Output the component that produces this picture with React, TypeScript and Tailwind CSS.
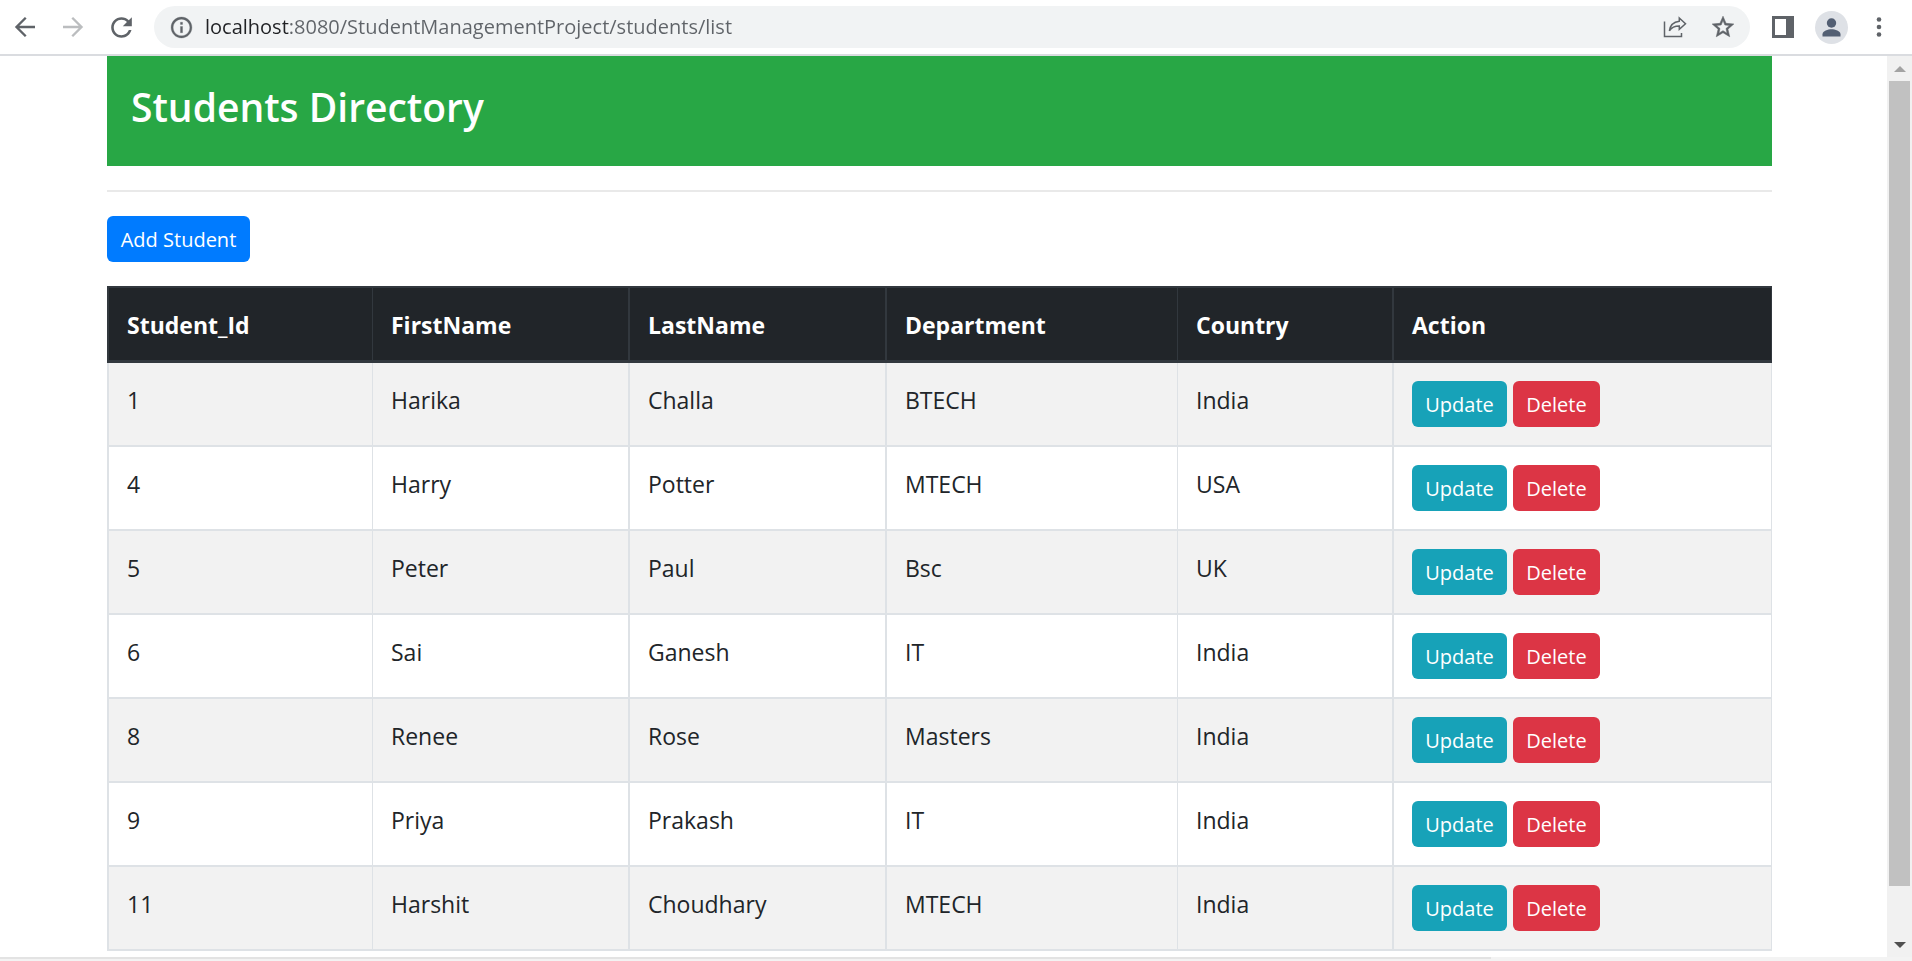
import type { ReactNode } from "react";

type Student = {
  id: number;
  firstName: string;
  lastName: string;
  department: string;
  country: string;
};

const students: Student[] = [
  { id: 1, firstName: "Harika", lastName: "Challa", department: "BTECH", country: "India" },
  { id: 4, firstName: "Harry", lastName: "Potter", department: "MTECH", country: "USA" },
  { id: 5, firstName: "Peter", lastName: "Paul", department: "Bsc", country: "UK" },
  { id: 6, firstName: "Sai", lastName: "Ganesh", department: "IT", country: "India" },
  { id: 8, firstName: "Renee", lastName: "Rose", department: "Masters", country: "India" },
  { id: 9, firstName: "Priya", lastName: "Prakash", department: "IT", country: "India" },
  { id: 11, firstName: "Harshit", lastName: "Choudhary", department: "MTECH", country: "India" },
];

const columns = [
  { title: "Student_Id", width: "w-[265px]", border: "border-l-2" },
  { title: "FirstName", width: "w-[256px]", border: "border-l" },
  { title: "LastName", width: "w-[257px]", border: "border-l-2" },
  { title: "Department", width: "w-[292px]", border: "border-l-2" },
  { title: "Country", width: "w-[215px]", border: "border-l" },
  { title: "Action", width: "w-[380px]", border: "border-l-2 border-r" },
];

function IconButton({ label, children }: { label: string; children: ReactNode }) {
  return (
    <button type="button" aria-label={label} className="flex size-8 shrink-0 items-center justify-center text-[#5f6368]">
      {children}
    </button>
  );
}

function BrowserBar() {
  return (
    <header className="flex h-14 items-center border-b-2 border-[#dadce0] bg-white pl-[9px] pr-[17px]">
      <nav aria-label="History" className="mr-[17px] flex gap-4">
        <IconButton label="Back">
          <svg viewBox="0 0 24 24" className="size-[30px]" fill="none" stroke="currentColor" strokeWidth="1.9">
            <path d="M20 12H5M12.6 4.6L5.2 12l7.4 7.4" />
          </svg>
        </IconButton>
        <IconButton label="Forward">
          <svg viewBox="0 0 24 24" className="size-[30px] text-[#bbbdbf]" fill="none" stroke="currentColor" strokeWidth="1.9">
            <path d="M4 12h15M11.4 4.6l7.4 7.4-7.4 7.4" />
          </svg>
        </IconButton>
        <IconButton label="Reload">
          <svg viewBox="0 0 24 24" className="size-[31px]" fill="currentColor">
            <path d="M17.65 6.35C16.2 4.9 14.21 4 12 4c-4.42 0-7.99 3.58-7.99 8s3.57 8 7.99 8c3.73 0 6.84-2.55 7.73-6h-2.08c-.82 2.33-3.04 4-5.65 4-3.31 0-6-2.69-6-6s2.69-6 6-6c1.66 0 3.14.69 4.22 1.78L13 11h7V4l-2.35 2.35z" />
          </svg>
        </IconButton>
      </nav>
      <div className="flex h-[42px] flex-1 items-center rounded-full bg-[#f1f3f4] pl-[11px] pr-[11px]">
        <IconButton label="Site information">
          <svg viewBox="0 0 24 24" className="size-[25px]" fill="currentColor" stroke="currentColor" strokeWidth="0.3">
            <path d="M11 7h2v2h-2zm0 4h2v6h-2zm1-9C6.48 2 2 6.48 2 12s4.48 10 10 10 10-4.48 10-10S17.52 2 12 2zm0 18c-4.41 0-8-3.59-8-8s3.59-8 8-8 8 3.59 8 8-3.59 8-8 8z" />
          </svg>
        </IconButton>
        <input
          type="text"
          aria-label="Address"
          defaultValue="localhost:8080/StudentManagementProject/students/list"
          className="ml-2 min-w-0 flex-1 bg-[linear-gradient(to_right,#202124_84px,#5f6368_84px)] bg-clip-text text-xl text-transparent outline-none"
        />
        <div className="flex gap-4">
          <IconButton label="Share">
            <svg viewBox="0 0 24 22" className="h-[22px] w-6" fill="none" stroke="currentColor" strokeWidth="1.5">
              <path d="M1.5 5.5v15h17v-3.6" />
              <path d="M16.3 2l6.2 5.7-6.2 5.7v-3.3c-4.4 0-7.6 1.2-9.9 4.7C7 9.8 10 6 16.3 5.2z" />
            </svg>
          </IconButton>
          <IconButton label="Bookmark">
            <svg viewBox="0 0 24 24" className="size-[26px]" fill="currentColor" stroke="currentColor" strokeWidth="0.5">
              <path d="M22 9.24l-7.19-.62L12 2 9.19 8.63 2 9.24l5.46 4.73L5.82 21 12 17.27 18.18 21l-1.63-7.03L22 9.24zM12 15.4l-3.76 2.27 1-4.28-3.32-2.88 4.38-.38L12 6.1l1.71 4.04 4.38.38-3.32 2.88 1 4.28L12 15.4z" />
            </svg>
          </IconButton>
        </div>
      </div>
      <div className="ml-[17px] flex gap-4">
        <IconButton label="Side panel">
          <svg viewBox="0 0 22 22" className="size-[22px]" fill="currentColor">
            <path fillRule="evenodd" d="M0 0h22v22H0zM3 3v16h11V3z" />
          </svg>
        </IconButton>
        <IconButton label="Profile">
          <svg viewBox="0 0 33 33" className="size-[33px] shrink-0">
            <circle cx="16.5" cy="16.5" r="16.5" fill="#dee1e6" />
            <circle cx="16.5" cy="12" r="4.7" fill="#535f73" />
            <path d="M7.5 25.5v-2.3c0-3.2 5.5-5 9-5s9 1.800 9 5v2.3z" fill="#535f73" />
          </svg>
        </IconButton>
        <IconButton label="Menu">
          <svg viewBox="0 0 6 22" className="h-[22px] w-1.5" fill="currentColor">
            <circle cx="3" cy="3.5" r="2.3" />
            <circle cx="3" cy="11" r="2.3" />
            <circle cx="3" cy="18.5" r="2.3" />
          </svg>
        </IconButton>
      </div>
    </header>
  );
}

function ActionLink({ tone, children }: { tone: string; children: ReactNode }) {
  return (
    <a href="#" className={`flex h-[46px] items-center justify-center rounded-md pt-px text-xl text-white ${tone}`}>
      {children}
    </a>
  );
}

function StudentRow({ student, striped }: { student: Student; striped: boolean }) {
  const values = [student.id, student.firstName, student.lastName, student.department, student.country];
  return (
    <tr className={striped ? "bg-[#f2f2f2]" : "bg-white"}>
      {values.map((value, i) => (
        <td key={i} className={`border-b-2 border-[#dee2e6] px-[18px] pb-[17px] pt-[19px] align-top ${columns[i].border}`}>
          {value}
        </td>
      ))}
      <td className={`border-b-2 border-[#dee2e6] p-[18px] align-top ${columns[5].border}`}>
        <div className="flex gap-1.5">
          <ActionLink tone="w-[95px] bg-[#17a2b8]">Update</ActionLink>
          <ActionLink tone="w-[87px] bg-[#dc3545]">Delete</ActionLink>
        </div>
      </td>
    </tr>
  );
}

function Scrollbar() {
  return (
    <div aria-hidden="true" className="flex w-[25px] shrink-0 flex-col items-center bg-[#f1f1f1]">
      <div className="flex h-[25px] items-center justify-center">
        <svg viewBox="0 0 12 6" className="h-1.5 w-3" fill="#a3a3a3">
          <path d="M0 6l6-6 6 6z" />
        </svg>
      </div>
      <div className="w-[21px] grow-[805] bg-[#c1c1c1]" />
      <div className="grow-[46]" />
      <div className="flex h-[25px] items-center justify-center">
        <svg viewBox="0 0 12 6" className="h-1.5 w-3" fill="#505050">
          <path d="M0 0l6 6 6-6z" />
        </svg>
      </div>
    </div>
  );
}

export default function App() {
  return (
    <div className="flex min-h-screen flex-col bg-white font-['Open_Sans','Noto_Sans',sans-serif] text-[#212529]">
      <BrowserBar />
      <div className="flex flex-1">
        <main className="min-w-0 flex-1 pb-1.5 pl-[107px] pr-[115px]">
          <div className="h-[110px] bg-[#28a745] px-6 pt-[26px]">
            <h1 className="text-[39px] font-semibold leading-[50px] text-white">Students Directory</h1>
          </div>
          <hr className="my-6 border-t-2 border-[#e9e9e9]" />
          <div className="flex">
            <ActionLink tone="w-[143px] bg-[#007bff]">Add Student</ActionLink>
          </div>
          <table className="mt-6 w-full table-fixed border-separate border-spacing-0 text-[23px] leading-9">
            <thead>
              <tr className="bg-[#212529] text-left text-white">
                {columns.map((column) => (
                  <th
                    key={column.title}
                    scope="col"
                    className={`border-b-3 border-t-2 border-[#32383e] px-[18px] pb-[17px] pt-[19px] font-bold ${column.width} ${column.border}`}
                  >
                    {column.title}
                  </th>
                ))}
              </tr>
            </thead>
            <tbody>
              {students.map((student, i) => (
                <StudentRow key={student.id} student={student} striped={i % 2 === 0} />
              ))}
            </tbody>
          </table>
        </main>
        <Scrollbar />
      </div>
      <div aria-hidden="true" className="h-1 bg-[#f3f3f3]">
        <div className="h-0.5 w-[78%] bg-[#e3e3e3]" />
      </div>
    </div>
  );
}
